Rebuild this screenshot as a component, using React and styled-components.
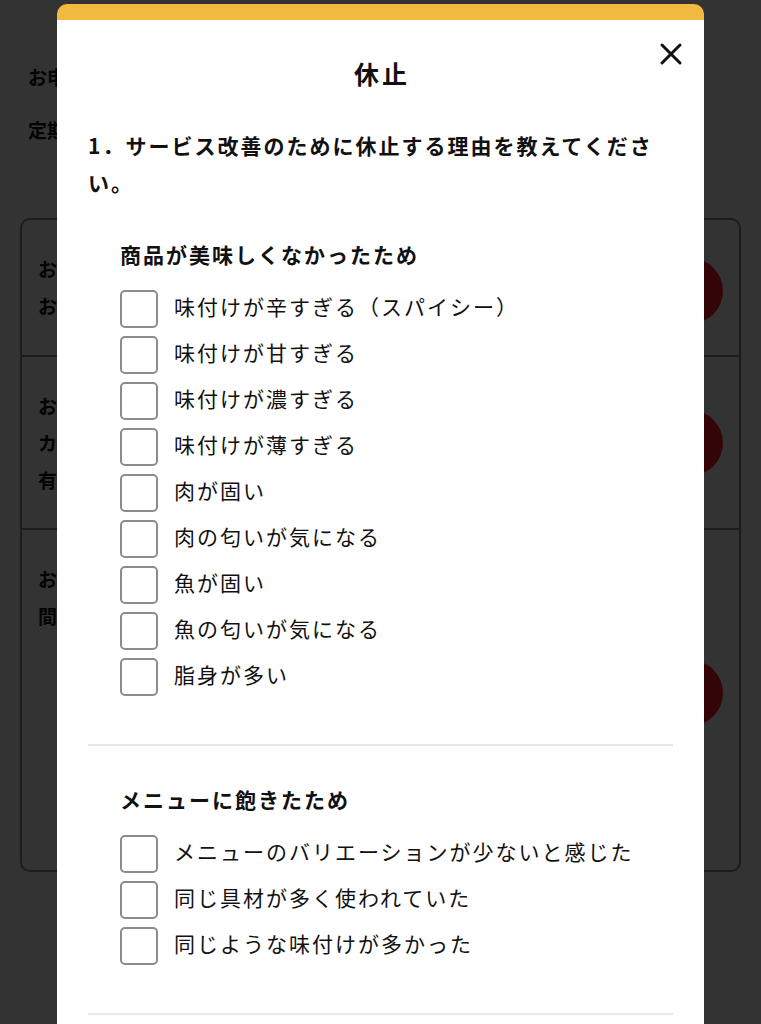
import React from "react";
import styled, { createGlobalStyle } from "styled-components";

const Global = createGlobalStyle`
  html, body { margin: 0; padding: 0; }
  body {
    background: #ffffff;
    font-family: "Noto Sans CJK JP", "Noto Sans", sans-serif;
    color: #111;
  }
  * { box-sizing: border-box; }
`;

const Page = styled.div`
  padding: 58px 20px 40px;
  min-height: 1024px;
`;

const InfoLine = styled.p`
  margin: 0 0 16px 8px;
  font-size: 19px;
  font-weight: 700;
  line-height: 37px;
`;

const Card = styled.div`
  margin-top: 70px;
  border: 2px solid #8a8a8a;
  border-radius: 10px;
  overflow: hidden;
`;

const CardRow = styled.div`
  display: flex;
  align-items: flex-start;
  justify-content: space-between;
  padding: 30px 16px 0 16px;
  height: ${(p) => p.$h}px;
  border-top: ${(p) => (p.$first ? "none" : "2px solid #8a8a8a")};
`;

const RowText = styled.div`
  font-size: 19px;
  font-weight: 700;
  line-height: 37px;
`;

const RedDot = styled.span`
  width: 66px;
  height: 66px;
  border-radius: 50%;
  background: #ff1a2e;
  flex-shrink: 0;
  margin-top: ${(p) => p.$mt || 0}px;
`;

const Overlay = styled.div`
  position: fixed;
  inset: 0;
  background: rgba(0, 0, 0, 0.8);
  overflow: hidden;
  display: flex;
  justify-content: center;
  align-items: flex-start;
  padding-top: 4px;
`;

const Modal = styled.div`
  position: relative;
  width: 647px;
  background: #ffffff;
  border-radius: 10px 10px 0 0;
  border-top: 16px solid #f2b940;
  padding: 35px 31px 40px;
`;

const Title = styled.h2`
  margin: 0;
  text-align: center;
  font-size: 25px;
  font-weight: 700;
  line-height: 36px;
  letter-spacing: 3px;
  padding-left: 3px;
`;

const CloseButton = styled.button`
  position: absolute;
  top: 22px;
  right: 21px;
  width: 24px;
  height: 24px;
  padding: 0;
  border: none;
  background: transparent;
  cursor: pointer;
  display: flex;
  align-items: center;
  justify-content: center;
`;

const Question = styled.p`
  margin: 36px 0 0;
  font-size: 21px;
  font-weight: 700;
  line-height: 37px;
  letter-spacing: 2px;
`;

const Section = styled.section`
  padding: 38px 0 48px 32px;
  border-bottom: 2px solid #e8e8e8;
`;

const SectionHeading = styled.h3`
  margin: 0 0 21px;
  font-size: 21px;
  font-weight: 700;
  line-height: 30px;
  letter-spacing: 2px;
`;

const OptionList = styled.div`
  display: flex;
  flex-direction: column;
  gap: 8px;
`;

const Option = styled.label`
  display: flex;
  align-items: center;
  gap: 16px;
  cursor: pointer;
`;

const Box = styled.span`
  width: 38px;
  height: 38px;
  border: 2px solid #8c8c8c;
  border-radius: 5px;
  background: #fff;
  flex-shrink: 0;
`;

const OptionText = styled.span`
  font-size: 21px;
  font-weight: 400;
  line-height: 30px;
  letter-spacing: 2px;
  margin-top: -6px;
  color: #111;
`;

const sections = [
  {
    title: "商品が美味しくなかったため",
    items: [
      "味付けが辛すぎる（スパイシー）",
      "味付けが甘すぎる",
      "味付けが濃すぎる",
      "味付けが薄すぎる",
      "肉が固い",
      "肉の匂いが気になる",
      "魚が固い",
      "魚の匂いが気になる",
      "脂身が多い",
    ],
  },
  {
    title: "メニューに飽きたため",
    items: [
      "メニューのバリエーションが少ないと感じた",
      "同じ具材が多く使われていた",
      "同じような味付けが多かった",
    ],
  },
  {
    title: "価格が高いと感じたため",
    items: ["商品の価格が高い", "送料が高い"],
  },
];

export default function App() {
  return (
    <>
      <Global />
      <Page>
        <InfoLine>お申し込み内容をご確認ください</InfoLine>
        <InfoLine>定期便の設定</InfoLine>
        <Card>
          <CardRow $first $h={135}>
            <RowText>
              お届け間隔
              <br />
              お届け曜日
            </RowText>
            <RedDot $mt={8} />
          </CardRow>
          <CardRow $h={173}>
            <RowText>
              お支払い方法
              <br />
              カード番号
              <br />
              有効期限
            </RowText>
            <RedDot $mt={23} />
          </CardRow>
          <CardRow $h={342}>
            <RowText>
              お届け予定日
              <br />
              間隔の変更
            </RowText>
            <RedDot $mt={100} />
          </CardRow>
        </Card>
      </Page>
      <Overlay>
        <Modal>
          <CloseButton aria-label="閉じる">
            <svg width="24" height="24" viewBox="0 0 24 24">
              <path
                d="M3 3 L21 21 M21 3 L3 21"
                stroke="#111"
                strokeWidth="3"
                strokeLinecap="round"
              />
            </svg>
          </CloseButton>
          <Title>休止</Title>
          <Question>1．サービス改善のために休止する理由を教えてください。</Question>
          {sections.map((s) => (
            <Section key={s.title}>
              <SectionHeading>{s.title}</SectionHeading>
              <OptionList>
                {s.items.map((it) => (
                  <Option key={it}>
                    <Box />
                    <OptionText>{it}</OptionText>
                  </Option>
                ))}
              </OptionList>
            </Section>
          ))}
        </Modal>
      </Overlay>
    </>
  );
}
